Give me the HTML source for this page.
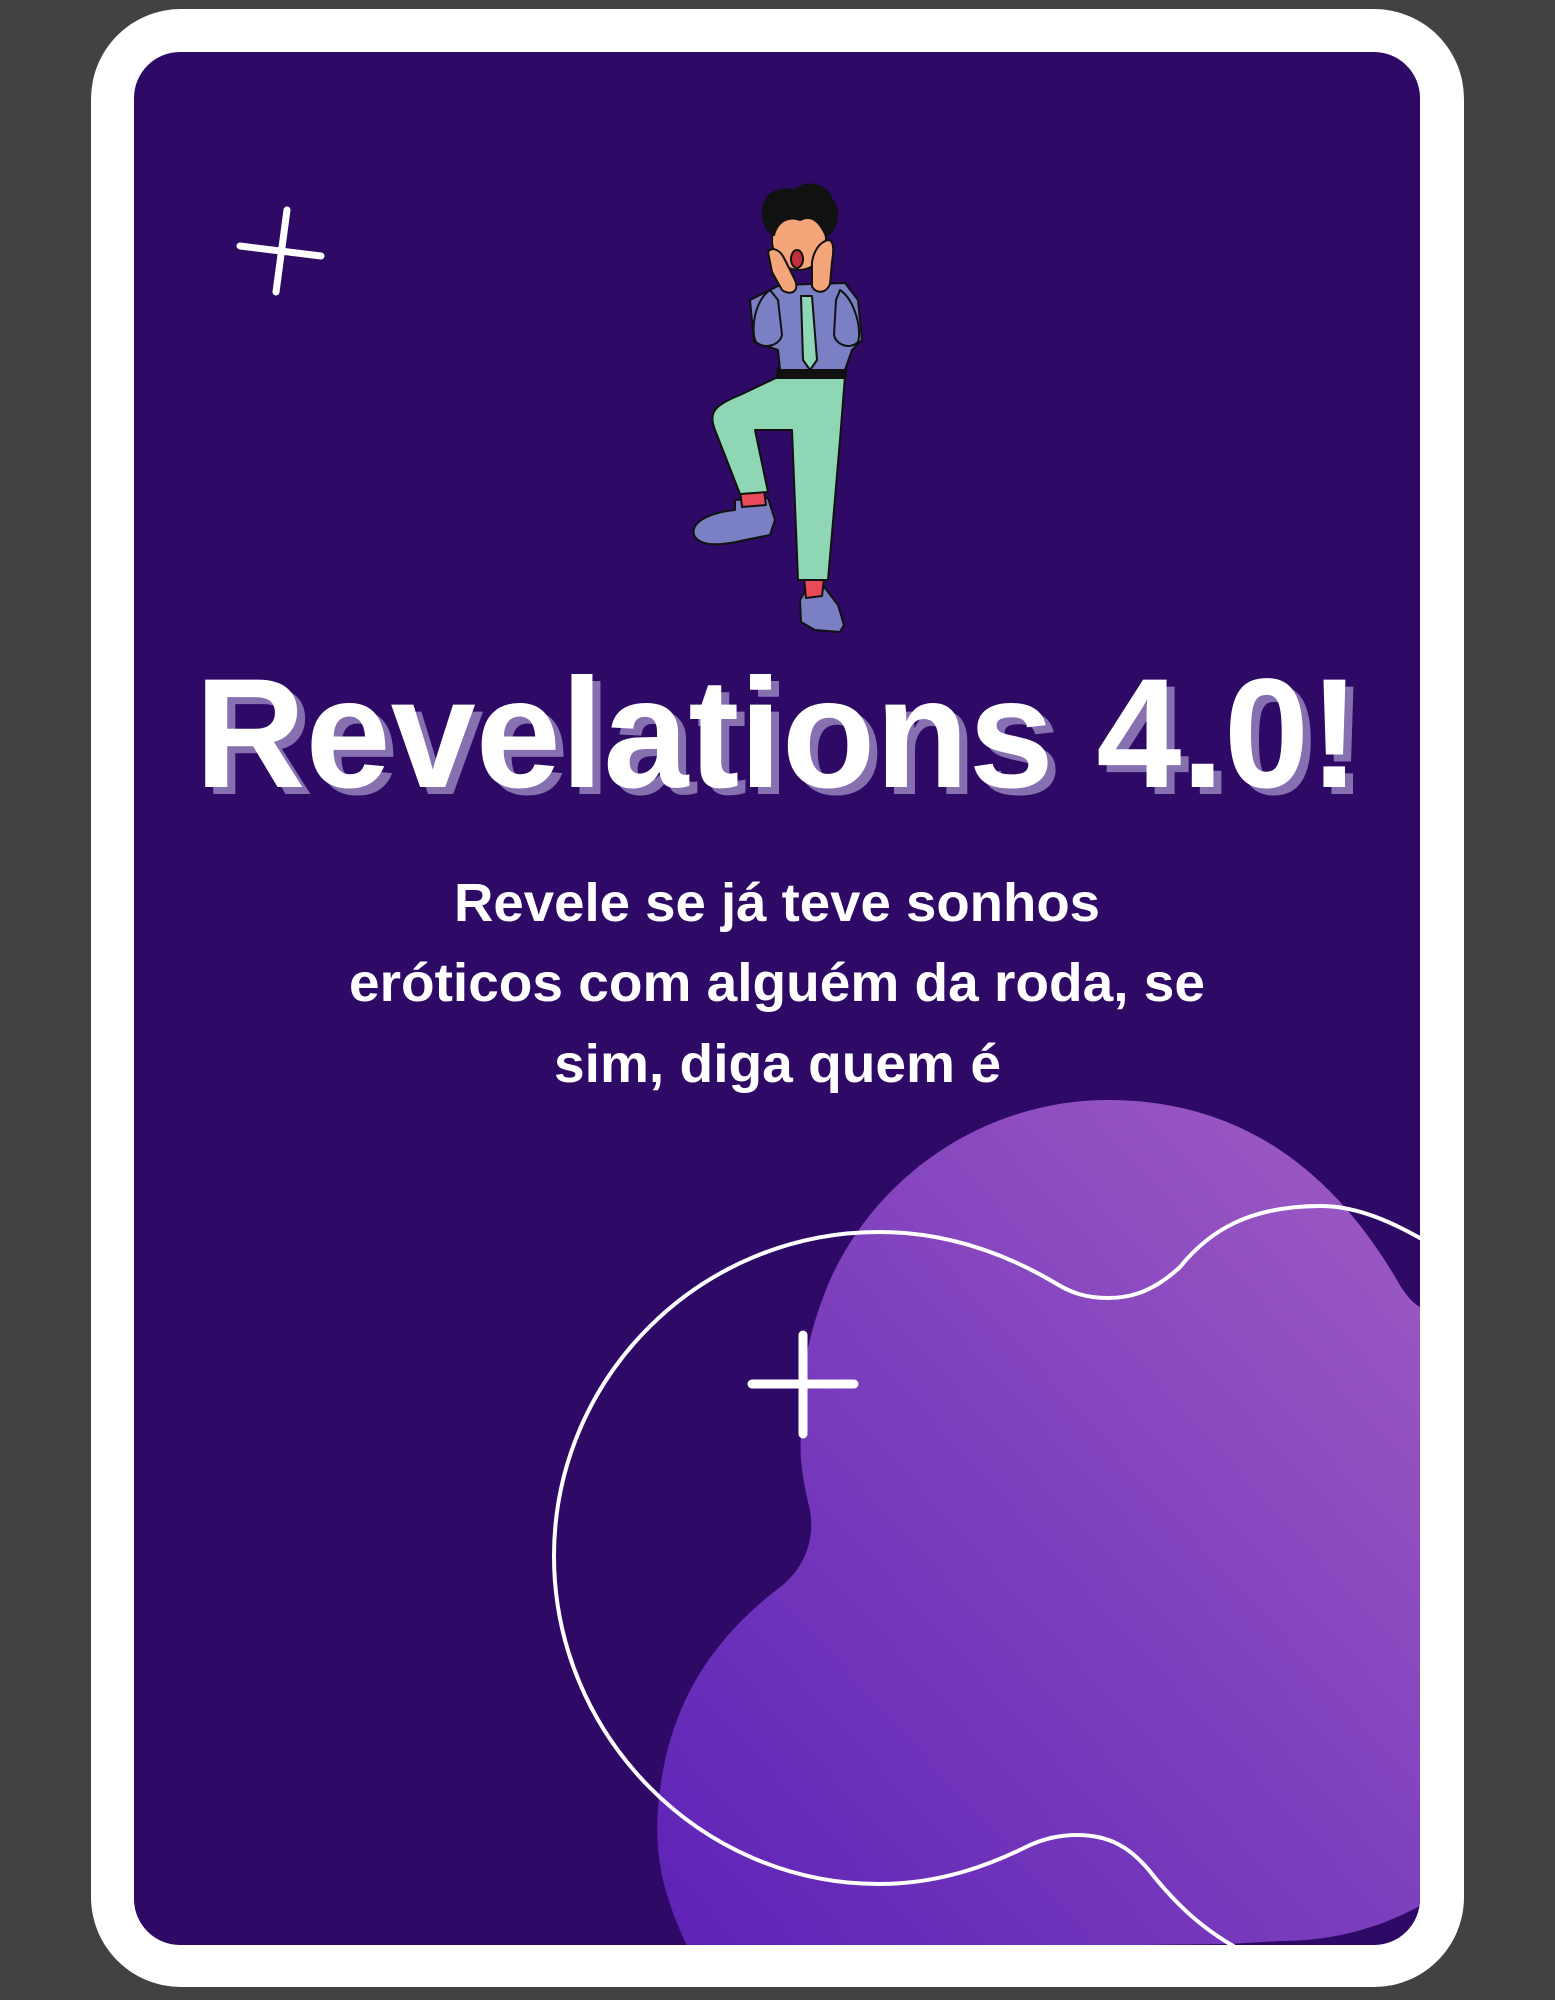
<!DOCTYPE html>
<html><head><meta charset="utf-8"><style>
html,body{margin:0;padding:0;background:#424242;width:1555px;height:2000px;overflow:hidden}
svg{display:block}
</style></head><body>
<svg width="1555" height="2000" viewBox="0 0 1555 2000" xmlns="http://www.w3.org/2000/svg">
<defs>
<clipPath id="inner"><rect x="134" y="52" width="1286" height="1893" rx="46"/></clipPath>
<linearGradient id="g" x1="0" y1="1" x2="1" y2="0">
<stop offset="0" stop-color="#5d22b6"/><stop offset="0.5" stop-color="#7d3fbd"/><stop offset="1" stop-color="#a25ec4"/>
</linearGradient>
</defs>
<rect x="0" y="0" width="1555" height="2000" fill="#424242"/>
<rect x="91" y="9" width="1373" height="1978" rx="90" fill="#fff"/>
<rect x="134" y="52" width="1286" height="1893" rx="46" fill="#2e0a66"/>
<g clip-path="url(#inner)">
<path d="M1108 1100 C1250 1100 1340 1180 1401 1287 C1410 1300 1415 1306 1430 1312 L1430 1900 C1380 1930 1330 1941 1280 1941 L1229 1944 L689 1950 C660 1890 655 1850 658 1809 C665 1720 700 1650 775 1591 C805 1570 815 1540 810 1510 C800 1470 800 1450 801 1436 C800 1380 805 1340 830 1280 C880 1170 990 1100 1108 1100 Z" fill="url(#g)"/>
<path d="M1440 1250 C1400 1225 1360 1206 1321 1206 C1250 1206 1210 1230 1180 1267 C1150 1295 1125 1298 1108 1298 C1085 1298 1070 1292 1057 1284 C1000 1250 940 1232 879 1232 C700 1232 554 1377 554 1556 C554 1735 700 1884 879 1884 C940 1884 990 1865 1028 1846 C1045 1838 1062 1835 1077 1835 C1110 1835 1130 1848 1148 1869 C1180 1910 1210 1935 1250 1955" fill="none" stroke="#fff" stroke-width="4"/>
<g stroke="#fff" stroke-linecap="round" fill="none">
<line x1="803" y1="1335" x2="803" y2="1434" stroke-width="9"/>
<line x1="752" y1="1384" x2="854" y2="1384" stroke-width="9"/>
<line x1="287" y1="210" x2="276" y2="292" stroke-width="7"/>
<line x1="240" y1="246" x2="321" y2="256" stroke-width="7"/>
</g>
</g>
<!-- figure -->
<g stroke="#111" stroke-width="2" stroke-linejoin="round">
<path d="M735 500 L768 498 L775 520 L770 535 L745 540 C725 545 700 548 694 535 C690 520 715 512 735 510 Z" fill="#7b7fc4"/>
<path d="M740 490 L764 490 L766 505 L742 507 Z" fill="#e84a5a"/>
<path d="M806 590 L825 588 L838 605 L844 625 L840 632 L815 630 L801 622 L800 600 Z" fill="#7b7fc4"/>
<path d="M804 578 L824 578 L822 596 L806 598 Z" fill="#e84a5a"/>
<path d="M780 376 L845 376 L840 440 L828 580 L798 580 L792 430 L755 430 L768 492 L740 494 L715 430 C708 412 715 405 740 395 Z" fill="#8ed6b4"/>
<rect x="777" y="368" width="69" height="10" fill="#111"/>
<!-- shirt torso + arms -->
<path d="M780 285 L845 283 L858 300 L862 340 L852 350 L845 370 L780 370 L778 350 L754 342 L750 300 Z" fill="#7b7fc4"/>
<path d="M770 290 C755 300 750 330 756 342 C765 350 780 345 782 335 L778 300 Z" fill="#7b7fc4"/>
<path d="M840 290 C855 300 862 330 858 342 C850 350 836 345 834 335 L836 300 Z" fill="#7b7fc4"/>
<path d="M801 296 L812 296 L817 360 L810 370 L803 360 Z" fill="#8ed6b4"/>
<!-- face -->
<ellipse cx="799" cy="240" rx="27" ry="30" fill="#f5a57a"/>
<ellipse cx="797" cy="259" rx="6" ry="9" fill="#c0303a"/>
<!-- hair -->
<path d="M764 222 C758 200 772 186 795 190 C805 180 828 184 832 200 C842 210 836 232 826 236 C820 222 812 214 800 220 C790 216 778 220 774 235 C768 232 766 228 764 222 Z" fill="#111"/>
<!-- hands -->
<path d="M768 252 C772 246 780 250 784 258 L795 280 C800 292 790 296 782 290 L772 272 Z" fill="#f5a57a"/>
<path d="M828 240 C834 240 834 250 832 262 L830 284 C826 294 815 294 812 286 L812 262 C814 250 820 242 828 240 Z" fill="#f5a57a"/>
</g>
<!-- title -->
<g font-family="Liberation Sans, sans-serif" font-weight="bold" text-anchor="start">
<text x="203" y="794" font-size="156" fill="#8670b0" textLength="1165" lengthAdjust="spacingAndGlyphs">Revelations 4.0!</text>
<text x="195" y="787" font-size="156" fill="#fff" textLength="1165" lengthAdjust="spacingAndGlyphs">Revelations 4.0!</text>
</g>
<g font-family="Liberation Sans, sans-serif" font-weight="bold" font-size="54" fill="#fff">
<text x="454" y="921" textLength="646" lengthAdjust="spacingAndGlyphs">Revele se já teve sonhos</text>
<text x="349" y="1001" textLength="856" lengthAdjust="spacingAndGlyphs">eróticos com alguém da roda, se</text>
<text x="554" y="1082" textLength="447" lengthAdjust="spacingAndGlyphs">sim, diga quem é</text>
</g>
</svg>
</body></html>
